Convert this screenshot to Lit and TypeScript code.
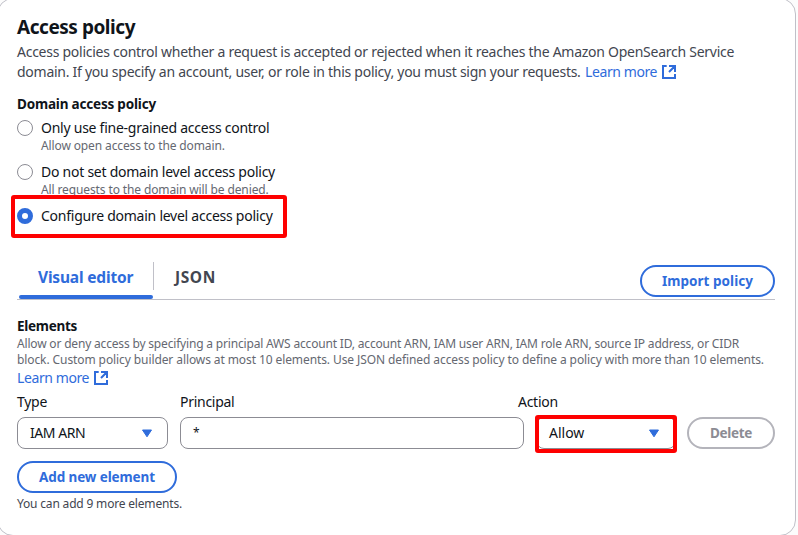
import { LitElement, html, css } from "lit";

const externalIcon = html`<svg class="ext" viewBox="0 0 16 16" aria-hidden="true">
  <path d="M5.7 2H2v12h12v-4M8 2h6v6M14 2 8 8" />
</svg>`;

const caret = html`<svg class="caret" viewBox="0 0 12 9" aria-hidden="true">
  <path d="M1.5 1h9L6 7.8z" />
</svg>`;

class AccessRadio extends LitElement {
  static properties = {
    label: { type: String },
    hint: { type: String },
    checked: { type: Boolean },
  };
  declare label: string;
  declare hint: string;
  declare checked: boolean;

  static styles = css`
    :host { display: flex; gap: 8px; }
    .dot {
      box-sizing: border-box; flex: none; width: 16px; height: 16px; margin-top: 2px;
      border: 1px solid #8c8c94; border-radius: 50%; background: #fff;
    }
    .dot.on { border: 5px solid #2f6cdb; }
    .label { line-height: 20px; letter-spacing: -0.25px; white-space: nowrap; color: #0f141a; }
    .hint { font-size: 12px; line-height: 16px; letter-spacing: -0.12px; white-space: nowrap; color: #656871; }
  `;

  render() {
    return html`
      <span class="dot ${this.checked ? "on" : ""}"></span>
      <div>
        <div class="label">${this.label}</div>
        ${this.hint ? html`<div class="hint">${this.hint}</div>` : ""}
      </div>`;
  }
}
customElements.define("access-radio", AccessRadio);

class AppRoot extends LitElement {
  static styles = css`
    :host {
      display: block; position: relative; width: 798px; height: 535px; overflow: hidden;
      background: #fcfcfc; color: #0f141a;
      font: 14px/20px "Noto Sans", "Open Sans", sans-serif;
    }
    * { box-sizing: border-box; }
    .card {
      width: 799px; height: 538px; margin: -2px 0 0 -3px; padding: 17px 20px 0 19px;
      border: 1px solid #c0c0c8; border-radius: 16px; background: #fff;
    }
    h2 { margin: 0; height: 26px; font-size: 19px; line-height: 22px; font-weight: 700; letter-spacing: -0.46px; }
    .desc { color: #424650; letter-spacing: -0.263px; white-space: nowrap; }
    .link { color: #2f6cdb; letter-spacing: -0.4px; }
    .desc .link { margin-left: 1px; }
    .ext {
      width: 16px; height: 16px; margin-left: 1px; vertical-align: -3px;
      fill: none; stroke: #2f6cdb; stroke-width: 2;
    }
    .heading { font-size: 13.5px; font-weight: 700; letter-spacing: -0.19px; }
    .heading.first { margin-top: 12px; }
    .radios { display: flex; flex-direction: column; gap: 8px; margin-top: 4px; }
    .tabs {
      display: flex; align-items: flex-end; justify-content: space-between;
      height: 38px; margin-top: 36px; border-bottom: 1px solid #c0c0c8;
    }
    .tablist { display: flex; height: 37px; padding-left: 2px; }
    .tab {
      height: 37px; padding: 5px 19px 0;
      font-size: 15.5px; font-weight: 700; line-height: 20px; color: #424650;
    }
    .tab.active {
      display: flex; flex-direction: column; justify-content: space-between;
      width: 134px; letter-spacing: -0.18px; color: #2f6cdb; white-space: nowrap;
    }
    .tab.active::after { content: ""; height: 4px; margin: 0 -19px; border-radius: 2px; background: #2f6cdb; }
    .tab.json { height: 28px; padding-left: 21px; border-left: 1px solid #c0c0c8; letter-spacing: 0.6px; }
    .btn {
      height: 32px; padding: 0; border: 2px solid #2f6cdb; border-radius: 16px; background: #fff; color: #2f6cdb;
      font-family: inherit; font-size: 13.5px; font-weight: 700; line-height: 20px; white-space: nowrap;
    }
    .import { width: 135px; margin-bottom: 2px; letter-spacing: 0.04px; }
    .add { display: block; width: 160px; margin-top: 12px; letter-spacing: -0.1px; }
    .delete { width: 88px; border-color: #b4b4bb; color: #8c8c94; letter-spacing: -0.3px; }
    .elements { margin-top: 16px; letter-spacing: -0.28px; }
    .note { font-size: 12px; line-height: 16px; color: #656871; letter-spacing: -0.179px; white-space: nowrap; }
    .note.second { letter-spacing: -0.094px; }
    .labels { display: grid; grid-template-columns: 163px 338px auto; margin-top: 4px; letter-spacing: -0.28px; }
    .row { display: grid; grid-template-columns: 151px 344px 140px 88px; column-gap: 12px; margin-top: 5px; }
    .row .delete { margin-left: -1px; }
    .field {
      display: flex; align-items: center; justify-content: space-between; height: 32px;
      padding: 0 14px 0 12px; border: 1px solid #8c8c94; border-radius: 8px;
    }
    .type { letter-spacing: -0.45px; }
    .principal { font-size: 12px; }
    .action { padding-right: 15px; }
    .caret { width: 12px; height: 9px; fill: #2f6cdb; stroke: #2f6cdb; stroke-width: 1; stroke-linejoin: round; }
    .help { margin-top: 3px; font-size: 12px; line-height: 16px; color: #424650; letter-spacing: -0.18px; }
    .mark { position: absolute; border: 4px solid #fe0000; border-radius: 3px; }
    .mark.option { left: 11px; top: 195px; width: 276px; height: 43px; }
    .mark.select { left: 535px; top: 415px; width: 142px; height: 38px; }
  `;

  render() {
    return html`
      <section class="card">
        <h2>Access policy</h2>
        <div class="desc">
          Access policies control whether a request is accepted or rejected when it reaches the Amazon OpenSearch Service<br />
          domain. If you specify an account, user, or role in this policy, you must sign your requests.
          <span class="link">Learn more ${externalIcon}</span>
        </div>
        <div class="heading first">Domain access policy</div>
        <div class="radios">
          <access-radio label="Only use fine-grained access control" hint="Allow open access to the domain."></access-radio>
          <access-radio label="Do not set domain level access policy" hint="All requests to the domain will be denied."></access-radio>
          <access-radio label="Configure domain level access policy" checked></access-radio>
        </div>
        <div class="tabs">
          <div class="tablist">
            <div class="tab active"><span>Visual editor</span></div>
            <div class="tab json">JSON</div>
          </div>
          <button class="btn import">Import policy</button>
        </div>
        <div class="heading elements">Elements</div>
        <div class="note">Allow or deny access by specifying a principal AWS account ID, account ARN, IAM user ARN, IAM role ARN, source IP address, or CIDR</div>
        <div class="note second">block. Custom policy builder allows at most 10 elements. Use JSON defined access policy to define a policy with more than 10 elements.</div>
        <div class="link">Learn more ${externalIcon}</div>
        <div class="labels"><span>Type</span><span>Principal</span><span>Action</span></div>
        <div class="row">
          <div class="field type">IAM ARN ${caret}</div>
          <div class="field principal">*</div>
          <div class="field action">Allow ${caret}</div>
          <button class="btn delete">Delete</button>
        </div>
        <button class="btn add">Add new element</button>
        <div class="help">You can add 9 more elements.</div>
      </section>
      <div class="mark option"></div>
      <div class="mark select"></div>`;
  }
}
customElements.define("app-root", AppRoot);
